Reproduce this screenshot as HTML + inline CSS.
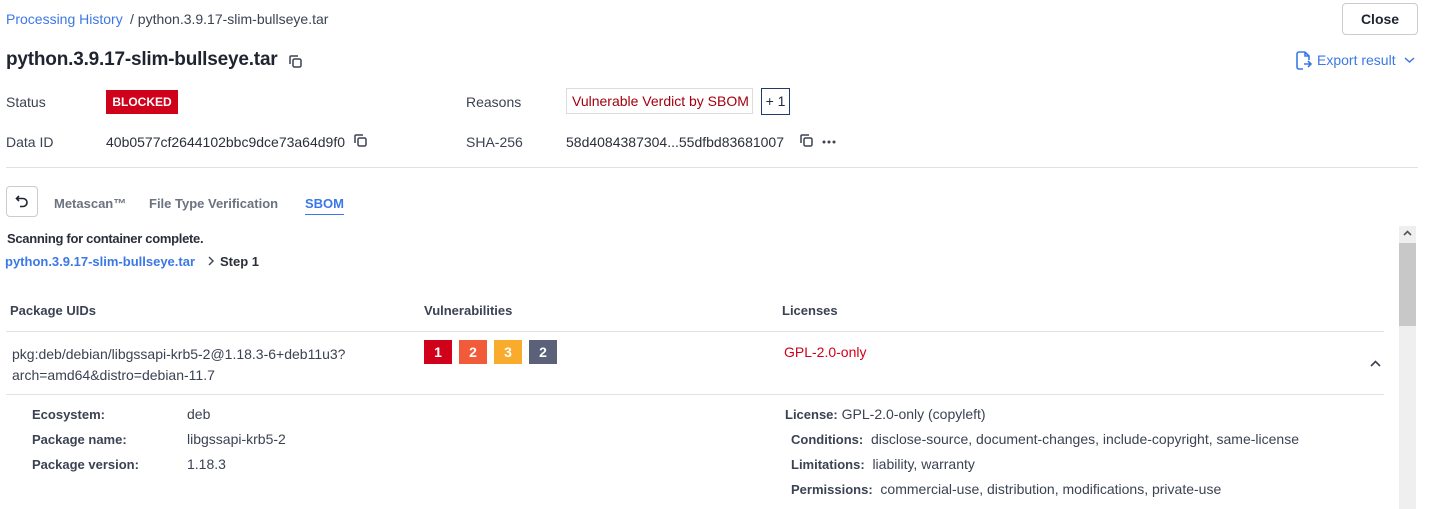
<!DOCTYPE html>
<html><head><meta charset="utf-8"><style>
*{margin:0;padding:0;box-sizing:border-box}
body{width:1432px;height:509px;overflow:hidden;background:#fff;font-family:"Liberation Sans",sans-serif;font-size:14px;color:#3b4252;position:relative}
.a{position:absolute;white-space:nowrap}
.b{font-weight:bold}
.m{font-weight:bold;font-size:13px}
.blue{color:#3b78e7}
.line{position:absolute;height:1px;background:#dde1e8}
.badge{position:absolute;width:28px;height:24px;color:#fff;font-weight:bold;text-align:center;line-height:24px;font-size:14px}
</style></head><body>
<div class="a blue" style="left:6px;top:11px">Processing History</div>
<div class="a" style="left:130px;top:11px;color:#3b4252">/ python.3.9.17-slim-bullseye.tar</div>
<div class="a b" style="left:1342px;top:3px;width:76px;height:32px;border:1px solid #c8ccd3;border-radius:4px;text-align:center;line-height:30px;color:#1f2430">Close</div>

<div class="a b" style="left:6px;top:49px;font-size:19px;letter-spacing:-0.2px;color:#1f2430">python.3.9.17-slim-bullseye.tar</div>
<svg class="a" style="left:288px;top:54px" width="15" height="15" viewBox="0 0 15 15" fill="none" stroke="#3b4252" stroke-width="1.5"><rect x="5" y="5" width="8" height="8" rx="1.5"/><path d="M2 10V3a1 1 0 0 1 1-1h7"/></svg>

<svg class="a" style="left:1296px;top:51px" width="16" height="19" viewBox="0 0 16 19" fill="none" stroke="#3b78e7" stroke-width="1.6"><path d="M9 1H3a2 2 0 0 0-2 2v13a2 2 0 0 0 2 2h4M9 1l4 4v4M9 1v4h4"/><path d="M8 13h7M12 10l3 3-3 3"/></svg>
<div class="a blue" style="left:1317px;top:52px;font-size:14px">Export result</div>
<svg class="a" style="left:1404px;top:56px" width="11" height="8" viewBox="0 0 11 8" fill="none" stroke="#3b78e7" stroke-width="1.5"><path d="M1 2l4.5 4L10 2"/></svg>

<div class="a" style="left:6px;top:94px">Status</div>
<div class="a b" style="left:106px;top:90px;width:72px;height:24px;background:#d0021b;color:#fff;font-size:12px;text-align:center;line-height:25px">BLOCKED</div>
<div class="a" style="left:466px;top:94px">Reasons</div>
<div class="a" style="left:566px;top:88px;width:187px;height:26px;border:1px solid #dcdcdc;color:#a3000f;line-height:24px;padding-left:5px">Vulnerable Verdict by SBOM</div>
<div class="a" style="left:761px;top:88px;width:29px;height:27px;border:1px solid #1f3a6b;color:#1f2a40;line-height:25px;text-align:center">+ 1</div>

<div class="a" style="left:6px;top:134px">Data ID</div>
<div class="a" style="left:106px;top:134px;color:#2a2f3a">40b0577cf2644102bbc9dce73a64d9f0</div>
<svg class="a" style="left:353px;top:133px" width="15" height="15" viewBox="0 0 15 15" fill="none" stroke="#3b4252" stroke-width="1.5"><rect x="5" y="5" width="8" height="8" rx="1.5"/><path d="M2 10V3a1 1 0 0 1 1-1h7"/></svg>
<div class="a" style="left:466px;top:134px">SHA-256</div>
<div class="a" style="left:566px;top:134px;color:#2a2f3a">58d4084387304...55dfbd83681007</div>
<svg class="a" style="left:799px;top:133px" width="15" height="15" viewBox="0 0 15 15" fill="none" stroke="#3b4252" stroke-width="1.5"><rect x="5" y="5" width="8" height="8" rx="1.5"/><path d="M2 10V3a1 1 0 0 1 1-1h7"/></svg>
<svg class="a" style="left:822px;top:140px" width="14" height="4" viewBox="0 0 14 4" fill="#3b4252"><circle cx="2" cy="2" r="1.5"/><circle cx="7" cy="2" r="1.5"/><circle cx="12" cy="2" r="1.5"/></svg>

<div class="line" style="left:6px;top:167px;width:1412px"></div>

<div class="a" style="left:6px;top:186px;width:32px;height:31px;border:1px solid #c8ccd3;border-radius:4px"></div>
<svg class="a" style="left:15px;top:194px" width="14" height="14" viewBox="0 0 14 14" fill="none" stroke="#1f2430" stroke-width="1.6"><path d="M4 2L1.5 4.5 4 7"/><path d="M2 4.5h6a4 4 0 0 1 0 8H5"/></svg>
<div class="a m" style="left:54px;top:196px;color:#6b7280">Metascan™</div>
<div class="a m" style="left:149px;top:196px;color:#6b7280">File Type Verification</div>
<div class="a m blue" style="left:305px;top:196px">SBOM</div>
<div class="a" style="left:305px;top:214px;width:39px;height:1px;background:#3b78e7"></div>

<div class="a m" style="left:7px;top:231px;color:#2a2f3a;letter-spacing:-0.3px">Scanning for container complete.</div>
<div class="a m blue" style="left:5px;top:254px">python.3.9.17-slim-bullseye.tar</div>
<svg class="a" style="left:207px;top:256px" width="8" height="10" viewBox="0 0 8 10" fill="none" stroke="#3b4252" stroke-width="1.4"><path d="M2 1l4 4-4 4"/></svg>
<div class="a m" style="left:220px;top:254px;color:#2a2f3a">Step 1</div>

<div class="a" style="left:1399px;top:226px;width:17px;height:283px;background:#efefef"></div>
<div class="a" style="left:1399px;top:243px;width:17px;height:83px;background:#c8c8c8"></div>
<svg class="a" style="left:1403px;top:230px" width="9" height="6" viewBox="0 0 9 6" fill="none" stroke="#555" stroke-width="1.6"><path d="M1 5l3.5-3.5L8 5"/></svg>

<div class="a m" style="left:10px;top:303px;color:#3b4252">Package UIDs</div>
<div class="a m" style="left:424px;top:303px;color:#3b4252">Vulnerabilities</div>
<div class="a m" style="left:782px;top:303px;color:#3b4252">Licenses</div>
<div class="line" style="left:6px;top:331px;width:1378px"></div>

<div class="a" style="left:12px;top:344px;line-height:21px;color:#3b4252">pkg:deb/debian/libgssapi-krb5-2@1.18.3-6+deb11u3?<br>arch=amd64&amp;distro=debian-11.7</div>
<div class="badge" style="left:424px;top:340px;background:#d0021b">1</div>
<div class="badge" style="left:459px;top:340px;background:#f25b3a">2</div>
<div class="badge" style="left:494px;top:340px;background:#f9ab2d">3</div>
<div class="badge" style="left:529px;top:340px;background:#5a6178">2</div>
<div class="a" style="left:784px;top:344px;color:#d0021b">GPL-2.0-only</div>
<svg class="a" style="left:1370px;top:360px" width="11" height="7" viewBox="0 0 11 7" fill="none" stroke="#3b4252" stroke-width="1.6"><path d="M1 6l4.5-4.5L10 6"/></svg>
<div class="line" style="left:6px;top:394px;width:1378px"></div>

<div class="a m" style="left:32px;top:407px">Ecosystem:</div>
<div class="a" style="left:187px;top:406px">deb</div>
<div class="a m" style="left:32px;top:432px">Package name:</div>
<div class="a" style="left:187px;top:431px">libgssapi-krb5-2</div>
<div class="a m" style="left:32px;top:457px">Package version:</div>
<div class="a" style="left:187px;top:456px">1.18.3</div>

<div class="a" style="left:785px;top:406px"><b style="font-size:13px">License:</b> GPL-2.0-only (copyleft)</div>
<div class="a" style="left:791px;top:431px"><b style="font-size:13px">Conditions:</b>&nbsp; disclose-source, document-changes, include-copyright, same-license</div>
<div class="a" style="left:791px;top:456px"><b style="font-size:13px">Limitations:</b>&nbsp; liability, warranty</div>
<div class="a" style="left:791px;top:481px"><b style="font-size:13px">Permissions:</b>&nbsp; commercial-use, distribution, modifications, private-use</div>
</body></html>
